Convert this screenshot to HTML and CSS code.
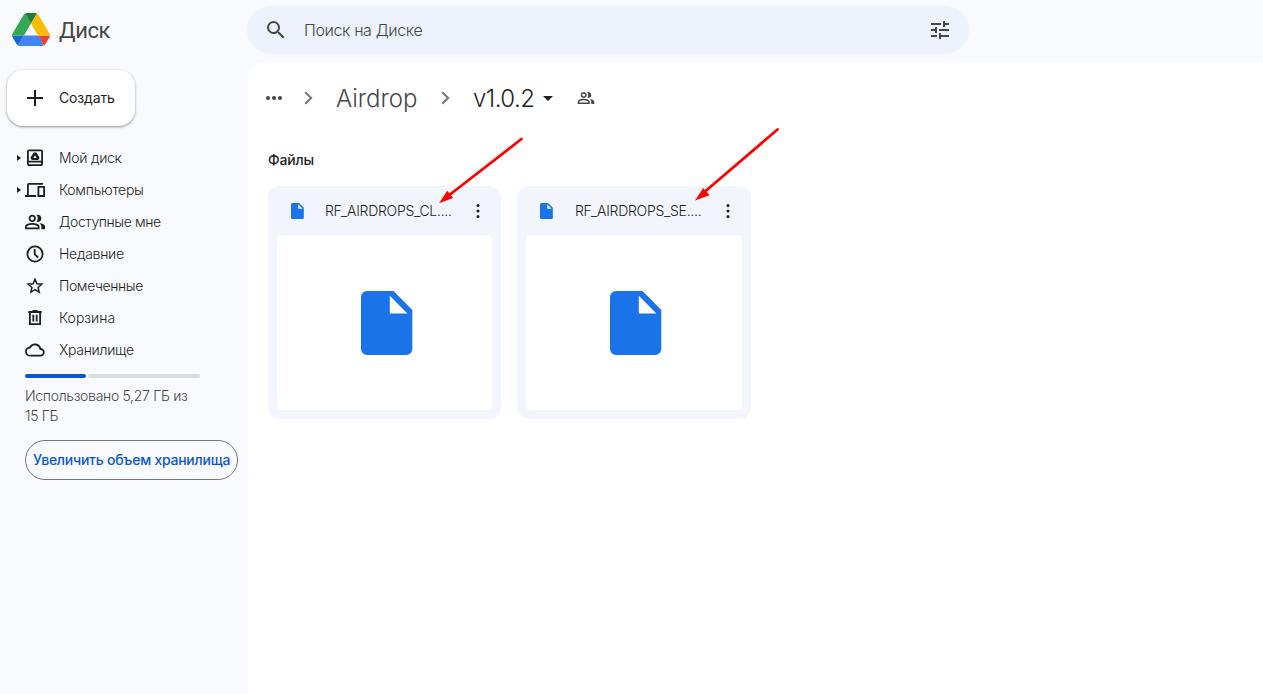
FILE: index.html
```html
<!DOCTYPE html>
<html lang="ru">
<head>
<meta charset="utf-8">
<title>v1.0.2 – Диск</title>
<link rel="stylesheet" href="styles.css">
</head>
<body>
<svg width="0" height="0" class="defs">
  <symbol id="people" viewBox="0 0 24 24"><path d="M1 20v-2.800q0-.85.44-1.560.43-.71 1.160-1.090 1.550-.78 3.150-1.160T9 13q1.650 0 3.250.39t3.150 1.160q.72.37 1.160 1.090T17 17.200V20H1zm18 0v-3q0-1.100-.61-2.110-.62-1.020-1.740-1.740 1.270.15 2.400.51 1.120.36 2.100.89.9.5 1.370 1.110Q23 16.280 23 17v3h-4zM9 12q-1.650 0-2.820-1.180Q5 9.650 5 8t1.180-2.830Q7.350 4 9 4t2.830 1.170T13 8t-1.170 2.820T9 12zm10-4q0 1.650-1.170 2.820Q16.650 12 15 12q-.28 0-.7-.06-.42-.07-.7-.14.67-.8 1.040-1.770Q15 9.050 15 8q0-1.050-.36-2.030-.37-.97-1.040-1.770.35-.13.7-.16Q14.650 4 15 4q1.650 0 2.830 1.170T19 8zM3 18h12v-.8q0-.28-.14-.5-.14-.23-.36-.35-1.350-.68-2.730-1.010Q10.400 15 9 15t-2.770.34q-1.380.33-2.730 1.010-.23.12-.36.35-.14.22-.14.5v.8zm6-8q.82 0 1.410-.59Q11 8.830 11 8t-.59-1.410Q9.820 6 9 6t-1.410.59Q7 7.170 7 8t.59 1.410Q8.180 10 9 10z"/></symbol>
  <symbol id="file" viewBox="0 0 52 64"><path fill="#1a73e8" fill-rule="evenodd" d="M6 0h26.500l18.800 19V58a6 6 0 0 1-6 6H6a6 6 0 0 1-6-6V6a6 6 0 0 1 6-6zM28.800 4.800v17.800h17.600z"/></symbol>
  <symbol id="chevron" viewBox="0 0 20 20"><path d="m7.200 4.200 6 5.800-6 5.800" fill="none" stroke="#747775" stroke-width="2"/></symbol>
  <symbol id="more" viewBox="0 0 24 24"><circle cx="12" cy="4.700" r="2"/><circle cx="12" cy="12" r="2"/><circle cx="12" cy="19.300" r="2"/></symbol>
</svg>
<header class="header">
  <div class="brand">
    <svg class="logo" viewBox="0 0 87.300 78" preserveAspectRatio="none">
      <path d="m6.600 66.850 3.850 6.650c.8 1.400 1.950 2.500 3.300 3.300l13.750-23.800h-27.500c0 1.550.4 3.100 1.200 4.500z" fill="#1967d2"/>
      <path d="m43.650 25-13.750-23.800c-1.350.8-2.500 1.900-3.300 3.300l-25.400 44a9.060 9.060 0 0 0 -1.200 4.500h27.500z" fill="#34a853"/>
      <path d="m73.550 76.800c1.350-.8 2.500-1.900 3.300-3.300l1.600-2.750 7.650-13.250c.8-1.400 1.200-2.950 1.200-4.500h-27.502l5.852 11.500z" fill="#ea4335"/>
      <path d="m43.650 25 13.750-23.800c-1.350-.8-2.900-1.200-4.500-1.200h-18.500c-1.600 0-3.150.45-4.500 1.200z" fill="#188038"/>
      <path d="m59.800 53h-32.300l-13.750 23.800c1.350.8 2.900 1.200 4.500 1.200h50.800c1.600 0 3.150-.45 4.500-1.200z" fill="#4285f4"/>
      <path d="m73.400 26.500-12.700-22c-.8-1.400-1.950-2.500-3.300-3.300l-13.750 23.800 16.150 28h27.450c0-1.550-.4-3.100-1.200-4.500z" fill="#fbbc04"/>
    </svg>
    <span class="brand-name">Диск</span>
  </div>
  <div class="search">
    <svg class="i24" viewBox="0 0 24 24"><path d="M15.500 14h-.79l-.28-.27A6.470 6.470 0 0 0 16 9.500 6.500 6.500 0 1 0 9.500 16c1.610 0 3.090-.59 4.230-1.570l.27.28v.79l5 4.990L20.490 19l-4.990-5zm-6 0C7.010 14 5 11.990 5 9.500S7.010 5 9.500 5 14 7.010 14 9.500 11.990 14 9.500 14z"/></svg>
    <span class="search-text">Поиск на Диске</span>
    <svg class="i24" viewBox="0 0 24 24"><path d="M3 17v2h6v-2H3zM3 5v2h10V5H3zm10 16v-2h8v-2h-8v-2h-2v6h2zM7 9v2H3v2h4v2h2V9H7zm14 4v-2H11v2h10zm-6-4h2V7h4V5h-4V3h-2v6z"/></svg>
  </div>
</header>
<div class="body">
  <aside class="sidebar">
    <div class="create">
      <svg width="16" height="16" viewBox="0 0 16 16"><path d="M7 0h2v7h7v2H9v7H7V9H0V7h7z"/></svg>
      <span class="create-label">Создать</span>
    </div>
    <nav class="nav">
      <div class="item"><i class="tri"></i><svg viewBox="0 0 20 20"><path fill-rule="evenodd" d="M4 1.500h12q.8 0 1.400.6T18 3.500V16q0 .8-.6 1.400T16 18H4q-.8 0-1.400-.6T2 16V3.500q0-.8.6-1.400T4 1.500zm-.2 1.800v9.500h12.400V3.300zm0 11.100v1.800h12.400v-1.800zM8.600 4.500h2.800l3.200 5.300-1.300 2.100H6.700L5.400 9.800zm1.400 2.700-1.600 2.700h3.200z"/></svg><span class="snug">Мой диск</span></div>
      <div class="item"><i class="tri"></i><svg viewBox="0 0 20 20"><path d="M0 17v-2h2V5q0-.8.500-1.400T4 3h14v1.800H3.800V15H11v2zm13 0q-.5 0-.5-.5v-10q0-.5.500-.5h6.500q.5 0 .5.500v10q0 .5-.5.500zm1.300-2h3.900V7.800h-3.900z"/></svg><span class="snug">Компьютеры</span></div>
      <div class="item"><i class="tri hidden"></i><svg viewBox="1 2 22 20"><use href="#people" width="24" height="24"/></svg><span class="tight">Доступные мне</span></div>
      <div class="item"><i class="tri hidden"></i><svg viewBox="0 0 20 20" class="line"><circle cx="10" cy="10" r="7.600"/><path d="M9.700 5v5.300l3.500 3.200"/></svg><span class="snug">Недавние</span></div>
      <div class="item"><i class="tri hidden"></i><svg viewBox="0 0 20 20" class="line star"><path d="m10 3.300 1.900 4.500 4.900.4-3.700 3.200 1.100 4.800-4.200-2.500-4.200 2.500 1.100-4.800-3.700-3.200 4.900-.4z"/></svg><span class="tight">Помеченные</span></div>
      <div class="item"><i class="tri hidden"></i><svg viewBox="0 0 20 20" class="line"><path d="M3.300 4h13.400M7.500 3h5M4.900 4v12.200h10.200V4M8.300 6.800v6.700M11.700 6.800v6.700"/></svg><span>Корзина</span></div>
      <div class="item"><i class="tri hidden"></i><svg viewBox="0 0 20 20" class="line"><path d="M5.200 15.700a4.050 4.050 0 0 1-.3-8.200 5.600 5.600 0 0 1 10.500 1.500 3.350 3.350 0 0 1 .1 6.700z"/></svg><span class="snug">Хранилище</span></div>
    </nav>
    <div class="meter"><span class="used"></span><span class="free"></span></div>
    <div class="quota">Использовано 5,27 ГБ из<br>15 ГБ</div>
    <div class="upgrade">Увеличить объем хранилища</div>
  </aside>
  <main class="main">
    <div class="crumbs">
      <svg class="dots" viewBox="0 0 16 4"><circle cx="2" cy="2" r="2"/><circle cx="8" cy="2" r="2"/><circle cx="14" cy="2" r="2"/></svg>
      <svg class="chev c1" viewBox="0 0 20 20"><use href="#chevron"/></svg>
      <span class="crumb parent">Airdrop</span>
      <svg class="chev c2" viewBox="0 0 20 20"><use href="#chevron"/></svg>
      <span class="crumb current">v1.0.2</span>
      <i class="caret"></i>
      <svg class="shared" viewBox="0 0 24 24"><use href="#people"/></svg>
    </div>
    <h2 class="section">Файлы</h2>
    <div class="cards">
      <article class="card">
        <div class="card-head"><svg class="doc" viewBox="0 0 52 64"><use href="#file"/></svg><span class="name">RF_AIRDROPS_CL....</span><svg class="more" viewBox="0 0 24 24"><use href="#more"/></svg></div>
        <div class="preview"><svg class="big" viewBox="0 0 52 64"><use href="#file"/></svg></div>
      </article>
      <article class="card">
        <div class="card-head"><svg class="doc" viewBox="0 0 52 64"><use href="#file"/></svg><span class="name">RF_AIRDROPS_SE....</span><svg class="more" viewBox="0 0 24 24"><use href="#more"/></svg></div>
        <div class="preview"><svg class="big" viewBox="0 0 52 64"><use href="#file"/></svg></div>
      </article>
    </div>
  </main>
</div>
<svg class="arrows" viewBox="0 0 1263 694">
  <path d="M521.500 139 450 194.500M777.500 129.500 705 191.500" fill="none" stroke="#f00" stroke-width="2.800" stroke-linecap="round"/>
  <path d="m439 203.300 8.300-12.500 5.800 7.200zM695 200.500l8.300-12.500 6.200 7.200z" fill="#f00"/>
</svg>
</body>
</html>
```
FILE: styles.css
```css
* { box-sizing: border-box; }
body { margin: 0; width: 1263px; height: 694px; overflow: hidden; background: #f8fafd; color: #1f1f1f; font-family: Inter, Roboto, sans-serif; font-size: 14px; line-height: 20px; }
svg { display: block; flex: none; fill: #1f1f1f; }
span { white-space: nowrap; }
.defs { position: absolute; }
.header { display: flex; height: 62px; }
.brand { display: flex; align-items: center; width: 247px; height: 59px; padding-left: 12px; }
.logo { width: 38px; height: 33px; }
.brand-name { margin-left: 9px; padding-top: 3px; font-family: Roboto, sans-serif; font-size: 22px; line-height: 28px; letter-spacing: -.4px; color: #444746; }
.search { display: flex; align-items: center; width: 722px; height: 48px; margin-top: 6px; padding: 0 17px; border-radius: 24px; background: #edf2fc; color: #444746; }
.i24 { width: 24px; height: 24px; fill: #444746; }
.search-text { flex: 1; margin-left: 16px; font-size: 16px; font-weight: 300; letter-spacing: -.38px; }
.body { display: flex; height: 632px; }
.sidebar { width: 248px; padding-top: 8px; }
.create { display: flex; align-items: center; gap: 16px; width: 128px; height: 56px; margin-left: 7px; padding-left: 20px; border-radius: 16px; background: #fff; box-shadow: 0 1px 2px rgba(60,64,67,.45), 0 1px 3px 1px rgba(60,64,67,.1); }
.create-label { letter-spacing: -.15px; }
.nav { margin-top: 16px; }
.item { display: flex; align-items: center; height: 32px; padding-left: 17px; font-weight: 300; }
.item svg { width: 20px; height: 20px; margin: 0 14px 0 4px; }
.item .line { fill: none; stroke: #1f1f1f; stroke-width: 1.8; }
.item .star { stroke-width: 1.5; }
.snug { letter-spacing: -.28px; }
.tight { letter-spacing: -.4px; }
.tri { width: 4px; border: 3px solid transparent; border-right: 0; border-left: 4px solid #1f1f1f; }
.hidden { visibility: hidden; }
.meter { display: flex; gap: 2px; width: 175px; height: 4px; margin: 8px 0 0 25px; }
.used { width: 61px; border-radius: 2px; background: #0b57d0; }
.free { flex: 1; border-radius: 2px; background: #dadce0; }
.quota { margin: 8px 0 0 25px; color: #444746; font-weight: 300; letter-spacing: -.31px; }
.upgrade { display: flex; align-items: center; justify-content: center; width: 213px; height: 40px; margin: 14px 0 0 25px; border: 1px solid #747775; border-radius: 20px; color: #0b57d0; font-weight: 500; letter-spacing: -.25px; white-space: nowrap; }
.main { flex: 1; padding-left: 20px; border-radius: 16px 0 0; background: #fff; }
.crumbs { display: flex; align-items: center; height: 72px; margin-left: -2px; }
.dots { width: 16px; height: 4px; fill: #444746; }
.chev { width: 20px; height: 20px; }
.c1 { margin-left: 16px; }
.c2 { margin-left: 18px; }
.crumb { padding-top: 2px; font-size: 24px; line-height: 32px; font-weight: 300; }
.parent { width: 81px; margin-left: 18px; color: #444746; }
.current { width: 62px; margin-left: 18px; letter-spacing: -.55px; }
.caret { margin-left: 8px; border: 5px solid transparent; border-bottom: 0; border-top-color: #1f1f1f; }
.shared { width: 18px; height: 18px; margin-left: 24px; fill: #444746; }
.section { height: 20px; margin: 16px 0 0; font-size: 14px; line-height: 20px; font-weight: 500; letter-spacing: -.2px; }
.cards { display: grid; grid-template-columns: 233px 234px; gap: 16px; margin-top: 16px; }
.card { height: 233px; padding: 0 9px 9px; border-radius: 12px; background: #f2f5fc; }
.card-head { display: flex; align-items: center; height: 49px; padding-left: 14px; }
.doc { width: 13px; height: 16px; }
.name { width: 128px; margin-left: 21px; font-weight: 300; letter-spacing: -.28px; }
.more { width: 18px; height: 18px; margin-left: 16px; }
.card + .card .name { margin-left: 22px; }
.preview { display: flex; align-items: center; justify-content: center; height: 175px; border-radius: 4px; background: #fff; }
.big { width: 52px; height: 64px; margin-left: 4px; }
.arrows { position: absolute; top: 0; left: 0; width: 1263px; height: 694px; pointer-events: none; }
```
